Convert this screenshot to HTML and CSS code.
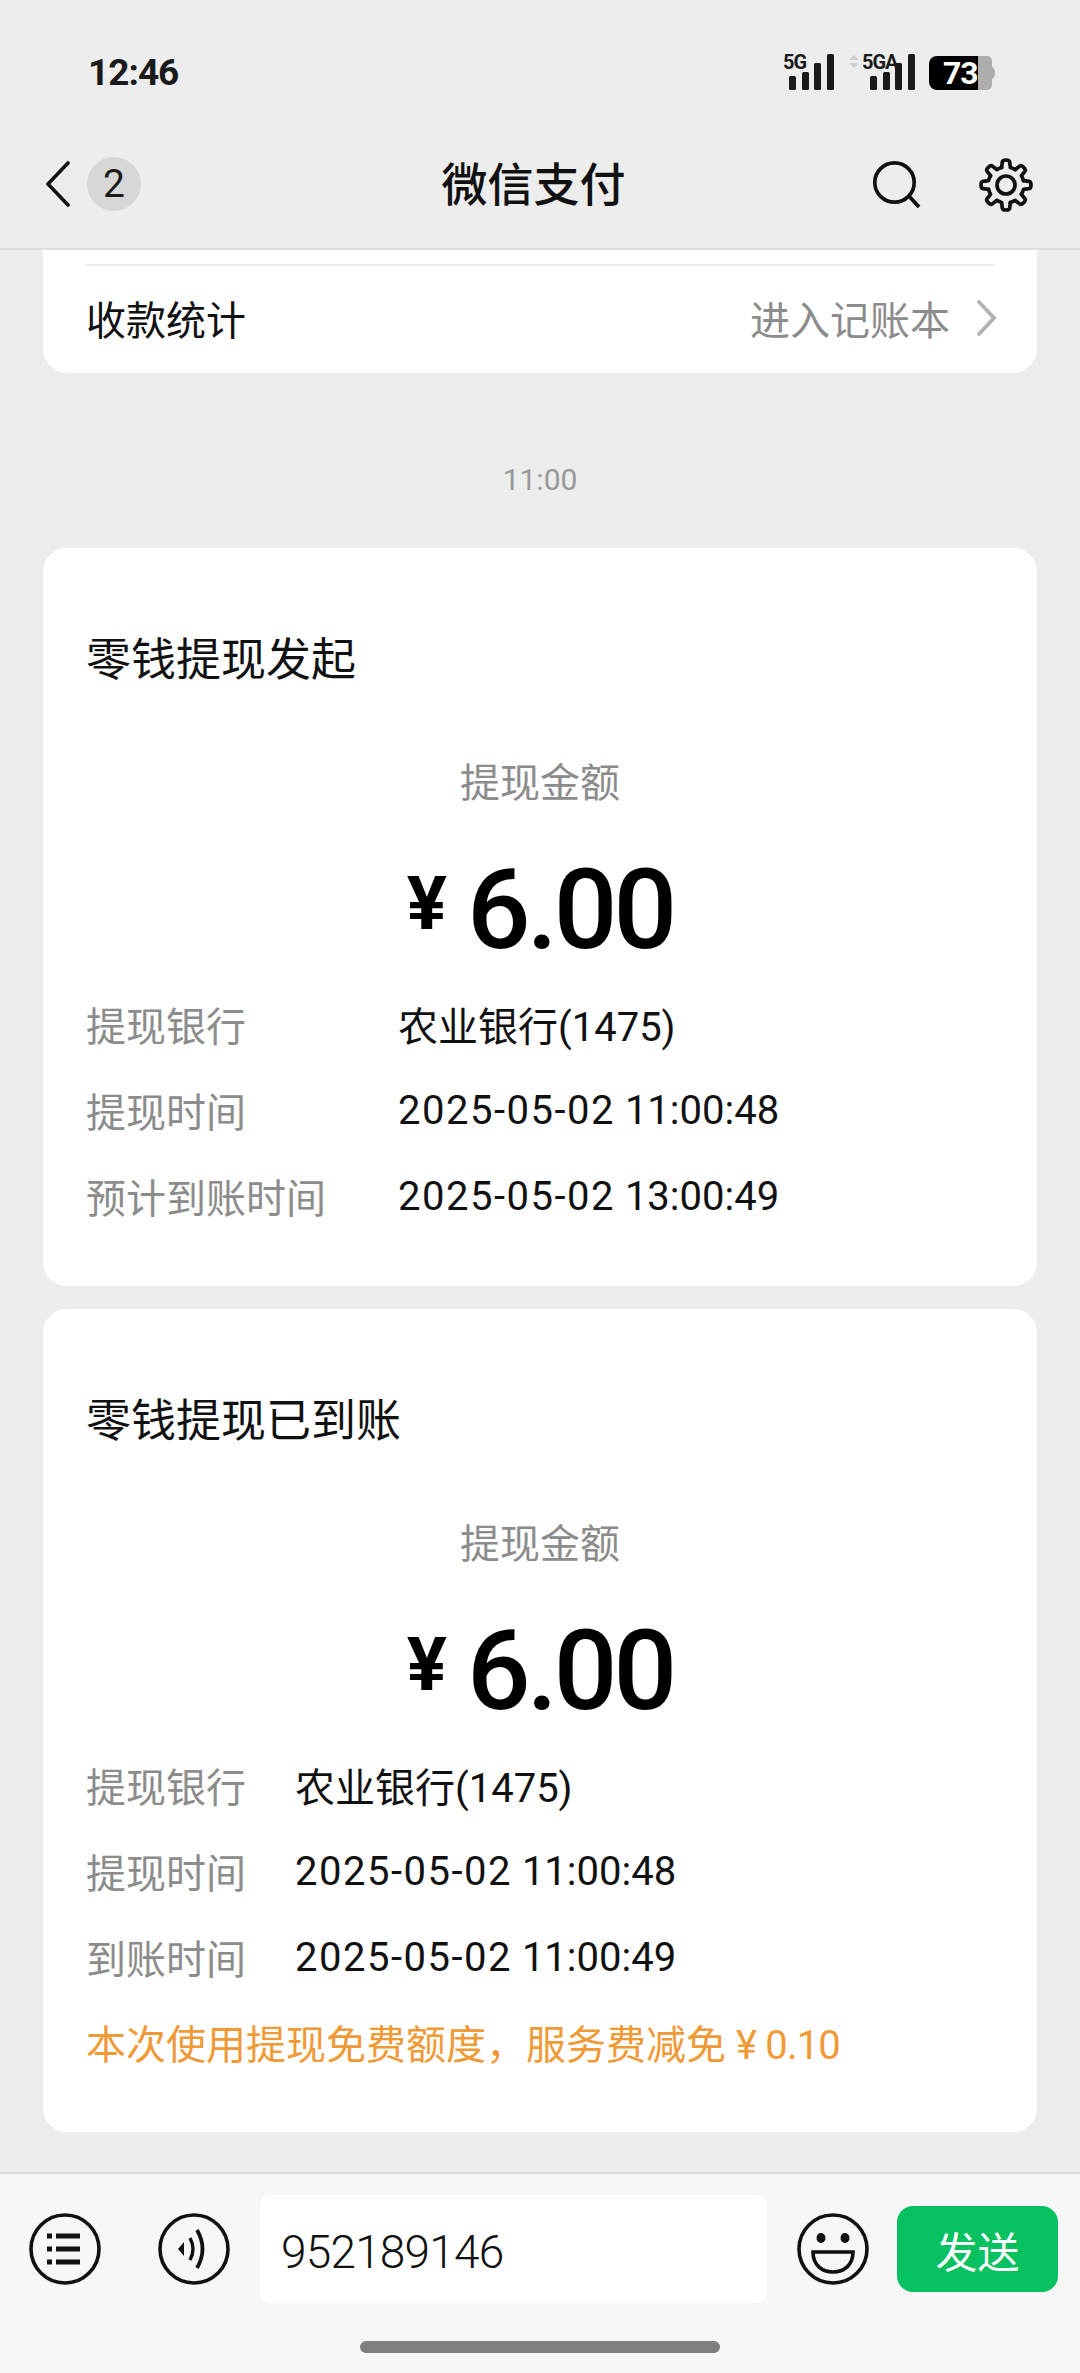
FILE: index.html
```html
<!DOCTYPE html>
<html lang="zh-CN">
<head>
    <meta charset="UTF-8">
    <meta name="viewport" content="width=device-width, initial-scale=1.0">
    <title>微信支付</title>
    <link rel="stylesheet" href="styles.css">
</head>
<body>
    <div class="screen">
        <header class="top">
            <div class="status-bar">
                <span class="clock">12:46</span>
                <div class="status-icons">
                    <svg class="signal" width="52" height="38" viewBox="0 0 52 38">
                        <text x="0" y="16" class="net-label">5G</text>
                        <rect x="6" y="23" width="7" height="14" rx="1.5"/>
                        <rect x="19" y="19" width="7" height="18" rx="1.5"/>
                        <rect x="31" y="10" width="7" height="27" rx="1.5"/>
                        <rect x="44" y="1" width="7" height="36" rx="1.5"/>
                    </svg>
                    <svg class="signal" width="67" height="38" viewBox="0 0 67 38">
                        <path class="arrows" d="M5 2l5 5H0zM5 15l5-5H0z"/>
                        <text x="13" y="16" class="net-label">5GA</text>
                        <rect x="21" y="23" width="7" height="14" rx="1.5"/>
                        <rect x="34" y="19" width="7" height="18" rx="1.5"/>
                        <rect x="46" y="10" width="7" height="27" rx="1.5"/>
                        <rect x="59" y="1" width="7" height="36" rx="1.5"/>
                    </svg>
                    <svg class="battery" width="66" height="34" viewBox="0 0 66 34">
                        <path class="battery-rest" d="M49 0h9a5 5 0 0 1 5 5v6q3 1 3 6t-3 6v6a5 5 0 0 1-5 5h-9z"/>
                        <path d="M49 0H8a8 8 0 0 0-8 8v18a8 8 0 0 0 8 8h41z"/>
                        <text x="14" y="28" class="battery-num">73</text>
                    </svg>
                </div>
            </div>
            <nav class="nav-bar">
                <div class="nav-left">
                    <svg width="24" height="46" viewBox="0 0 24 46" fill="none">
                        <path d="M22 2L2 23l20 21" stroke="#111" stroke-width="3.6" stroke-linecap="round" stroke-linejoin="miter"/>
                    </svg>
                    <span class="badge">2</span>
                </div>
                <h1 class="nav-title">微信支付</h1>
                <div class="nav-right">
                    <svg width="50" height="50" viewBox="0 0 50 50" fill="none">
                        <circle cx="21.500" cy="22.500" r="19.700" stroke="#111" stroke-width="3.700"/>
                        <path d="M35 35l11 12" stroke="#111" stroke-width="3.700"/>
                    </svg>
                    <svg width="56" height="56" viewBox="0 0 56 56" fill="none" stroke="#111" stroke-width="3.700" stroke-linecap="round" stroke-linejoin="round">
                        <circle cx="28" cy="28" r="9"/>
                        <g id="gear-teeth">
                            <path d="M23.650 10.530L24.300 5Q24.500 3 28 3T31.700 5L32.350 10.530A18 18 0 0 1 37.270 12.570"/>
                            <path transform="rotate(45 28 28)" d="M23.650 10.530L24.300 5Q24.500 3 28 3T31.700 5L32.350 10.530A18 18 0 0 1 37.270 12.570"/>
                            <path transform="rotate(90 28 28)" d="M23.650 10.530L24.300 5Q24.500 3 28 3T31.700 5L32.350 10.530A18 18 0 0 1 37.270 12.570"/>
                            <path transform="rotate(135 28 28)" d="M23.650 10.530L24.300 5Q24.500 3 28 3T31.700 5L32.350 10.530A18 18 0 0 1 37.270 12.570"/>
                            <path transform="rotate(180 28 28)" d="M23.650 10.530L24.300 5Q24.500 3 28 3T31.700 5L32.350 10.530A18 18 0 0 1 37.270 12.570"/>
                            <path transform="rotate(225 28 28)" d="M23.650 10.530L24.300 5Q24.500 3 28 3T31.700 5L32.350 10.530A18 18 0 0 1 37.270 12.570"/>
                            <path transform="rotate(270 28 28)" d="M23.650 10.530L24.300 5Q24.500 3 28 3T31.700 5L32.350 10.530A18 18 0 0 1 37.270 12.570"/>
                            <path transform="rotate(315 28 28)" d="M23.650 10.530L24.300 5Q24.500 3 28 3T31.700 5L32.350 10.530A18 18 0 0 1 37.270 12.570"/>
                        </g>
                    </svg>
                </div>
            </nav>
        </header>

        <main class="feed">
            <section class="card card-stub">
                <div class="stub-line"></div>
                <div class="stub-row">
                    <span>收款统计</span>
                    <span class="stub-link">
                        进入记账本
                        <svg width="20" height="36" viewBox="0 0 20 36" fill="none">
                            <path d="M2 2l15 16L2 34" stroke="#b3b3b3" stroke-width="3.8" stroke-linecap="round"/>
                        </svg>
                    </span>
                </div>
            </section>

            <div class="time-mark">11:00</div>

            <section class="card">
                <h2 class="card-title">零钱提现发起</h2>
                <div class="amount-label">提现金额</div>
                <div class="amount"><span class="yen">¥</span><span>6.00</span></div>
                <div class="info-row"><span class="info-key wide">提现银行</span><span>农业银行(1475)</span></div>
                <div class="info-row"><span class="info-key wide">提现时间</span><span><span class="date">2025-05-02</span> 11:00:48</span></div>
                <div class="info-row"><span class="info-key wide">预计到账时间</span><span><span class="date">2025-05-02</span> 13:00:49</span></div>
            </section>

            <section class="card">
                <h2 class="card-title">零钱提现已到账</h2>
                <div class="amount-label">提现金额</div>
                <div class="amount"><span class="yen">¥</span><span>6.00</span></div>
                <div class="info-row"><span class="info-key">提现银行</span><span>农业银行(1475)</span></div>
                <div class="info-row"><span class="info-key">提现时间</span><span><span class="date">2025-05-02</span> 11:00:48</span></div>
                <div class="info-row"><span class="info-key">到账时间</span><span><span class="date">2025-05-02</span> 11:00:49</span></div>
                <div class="info-row note"><span>本次使用提现免费额度，服务费减免 <span class="note-sum">¥ 0.10</span></span></div>
            </section>
        </main>

        <footer class="composer">
            <div class="composer-row">
                <svg class="tool" width="72" height="72" viewBox="0 0 72 72" fill="none" stroke="#111" stroke-width="3.6">
                    <circle cx="36" cy="36" r="34"/>
                    <path d="M27 23h24M27 36h24M27 49h24" stroke-width="5"/>
                    <path d="M18 23h5M18 36h5M18 49h5" stroke-width="5"/>
                </svg>
                <svg class="tool voice" width="72" height="72" viewBox="0 0 72 72" fill="none" stroke="#111" stroke-width="3.6">
                    <circle cx="36" cy="36" r="34"/>
                    <path d="M20 36l6-7v14z" fill="#111" stroke="none"/>
                    <path d="M32 25q6 11 0 22" stroke-width="3.4"/>
                    <path d="M39 17q11 19 0 38" stroke-width="3.8"/>
                </svg>
                <div class="text-input">952189146</div>
                <svg class="tool smile" width="72" height="72" viewBox="0 0 72 72" fill="none" stroke="#111" stroke-width="3.6">
                    <circle cx="36" cy="36" r="34"/>
                    <ellipse cx="24" cy="25" rx="4.500" ry="5" fill="#111" stroke="none"/>
                    <ellipse cx="48" cy="25" rx="4.500" ry="5" fill="#111" stroke="none"/>
                    <path d="M16 39h40c0 13-9 20-20 20s-20-7-20-20z"/>
                </svg>
                <button class="send" type="button">发送</button>
            </div>
            <div class="home-bar"></div>
        </footer>
    </div>
</body>
</html>
```
FILE: styles.css
```css
* {
    box-sizing: border-box;
}

body {
    margin: 0;
    background-color: #ededed;
    color: #111111;
    font-family: Roboto, "Noto Sans CJK SC", sans-serif;
}

.screen {
    width: 1080px;
    height: 2373px;
    display: flex;
    flex-direction: column;
    overflow: hidden;
}

/* top bars */
.top {
    height: 250px;
    flex-shrink: 0;
    border-bottom: 2px solid #dedede;
}

.status-bar {
    height: 140px;
    padding: 0 85px 0 88px;
    display: flex;
    justify-content: space-between;
    align-items: center;
}

.clock {
    margin-top: 4px;
    font-size: 37px;
    font-weight: 700;
    letter-spacing: -1px;
    color: #1a1a1a;
}

.status-icons {
    display: flex;
    align-items: center;
    gap: 13px;
}

.status-icons svg {
    overflow: visible;
}

.signal {
    fill: #1a1a1a;
    margin-top: 4px;
}

.signal:nth-child(2) {
    margin-left: 1px;
}

.net-label {
    font-family: Roboto, sans-serif;
    font-size: 20px;
    font-weight: 700;
    letter-spacing: -1px;
}

.arrows {
    fill: #cccccc;
}

.battery {
    fill: #000000;
    margin-top: 6px;
}

.battery-rest {
    fill: #adadad;
}

.battery-num {
    font-family: Roboto, sans-serif;
    font-size: 32px;
    font-weight: 700;
    letter-spacing: -1px;
    fill: #ffffff;
}

.nav-bar {
    height: 90px;
    padding: 0 46px;
    display: flex;
    align-items: center;
    justify-content: space-between;
    position: relative;
}

.nav-left,
.nav-right {
    display: flex;
    align-items: center;
}

.nav-left {
    gap: 17px;
    margin-top: -2px;
}

.nav-right {
    gap: 55px;
}

.badge {
    width: 54px;
    height: 54px;
    border-radius: 50%;
    background-color: #d7d7d7;
    display: flex;
    align-items: center;
    justify-content: center;
    font-size: 39px;
    color: #1a1a1a;
}

.nav-title {
    position: absolute;
    left: 0;
    right: 0;
    margin: 0;
    padding-right: 13px;
    text-align: center;
    font-size: 46px;
    font-weight: 500;
    line-height: 90px;
    pointer-events: none;
}

/* message list */
.feed {
    flex: 1;
    padding: 0 43px;
    display: flex;
    flex-direction: column;
    gap: 23px;
    overflow: hidden;
}

.card {
    background-color: #ffffff;
    border-radius: 24px;
    padding: 78px 43px 47px;
}

.card-stub {
    height: 123px;
    padding: 14px 43px 0;
    border-radius: 0 0 24px 24px;
}

.stub-line {
    height: 2px;
    background-color: #ececec;
}

.stub-row {
    height: 105px;
    display: flex;
    align-items: center;
    justify-content: space-between;
    font-size: 40px;
    padding-bottom: 2px;
}

.stub-link {
    display: flex;
    align-items: center;
    gap: 27px;
    color: #8c8c8c;
    margin-right: -3px;
}

.time-mark {
    height: 129px;
    padding-top: 62px;
    text-align: center;
    font-size: 30px;
    line-height: 44px;
    color: #999999;
}

.card-title {
    margin: 0;
    font-size: 45px;
    font-weight: 400;
    line-height: 70px;
}

.amount-label {
    margin-top: 60px;
    text-align: center;
    font-size: 40px;
    line-height: 56px;
    color: #8c8c8c;
}

.amount {
    margin-top: 33px;
    height: 130px;
    display: flex;
    justify-content: center;
    font-size: 112px;
    font-weight: 500;
    line-height: 130px;
    letter-spacing: -4px;
    color: #000000;
}

.yen {
    font-size: 75px;
    font-weight: 700;
    line-height: 116px;
    letter-spacing: 0;
    margin-right: 20px;
}

.info-row {
    height: 86px;
    display: flex;
    align-items: center;
    font-size: 40px;
}

.amount + .info-row {
    margin-top: 6px;
}

.info-key {
    width: 209px;
    color: #8c8c8c;
}

.info-key.wide {
    width: 312px;
}

.date {
    letter-spacing: 1.5px;
}

.note {
    color: #f09a37;
    margin-top: -1px;
}

.note-sum {
    letter-spacing: -0.8px;
}

/* bottom input */
.composer {
    height: 201px;
    flex-shrink: 0;
    background-color: #f7f7f7;
    border-top: 2px solid #dcdcdc;
}

.composer-row {
    height: 130px;
    padding: 21px 22px 0 29px;
    display: flex;
    align-items: flex-start;
}

.tool {
    margin-top: 18px;
    flex-shrink: 0;
}

.voice {
    margin-left: 57px;
}

.text-input {
    width: 508px;
    height: 108px;
    margin-left: 30px;
    padding: 5px 0 0 21px;
    background-color: #ffffff;
    border-radius: 10px;
    display: flex;
    align-items: center;
    font-size: 46px;
    font-weight: 300;
    letter-spacing: -0.8px;
    color: #111111;
}

.smile {
    margin-left: 30px;
}

.send {
    width: 161px;
    height: 86px;
    margin: 11px 0 0 28px;
    border: none;
    border-radius: 16px;
    background-color: #07c160;
    color: #ffffff;
    font-family: inherit;
    font-size: 42px;
}

.home-bar {
    width: 360px;
    height: 12px;
    margin: 37px auto 0;
    border-radius: 6px;
    background-color: #7f7f7f;
}
```
